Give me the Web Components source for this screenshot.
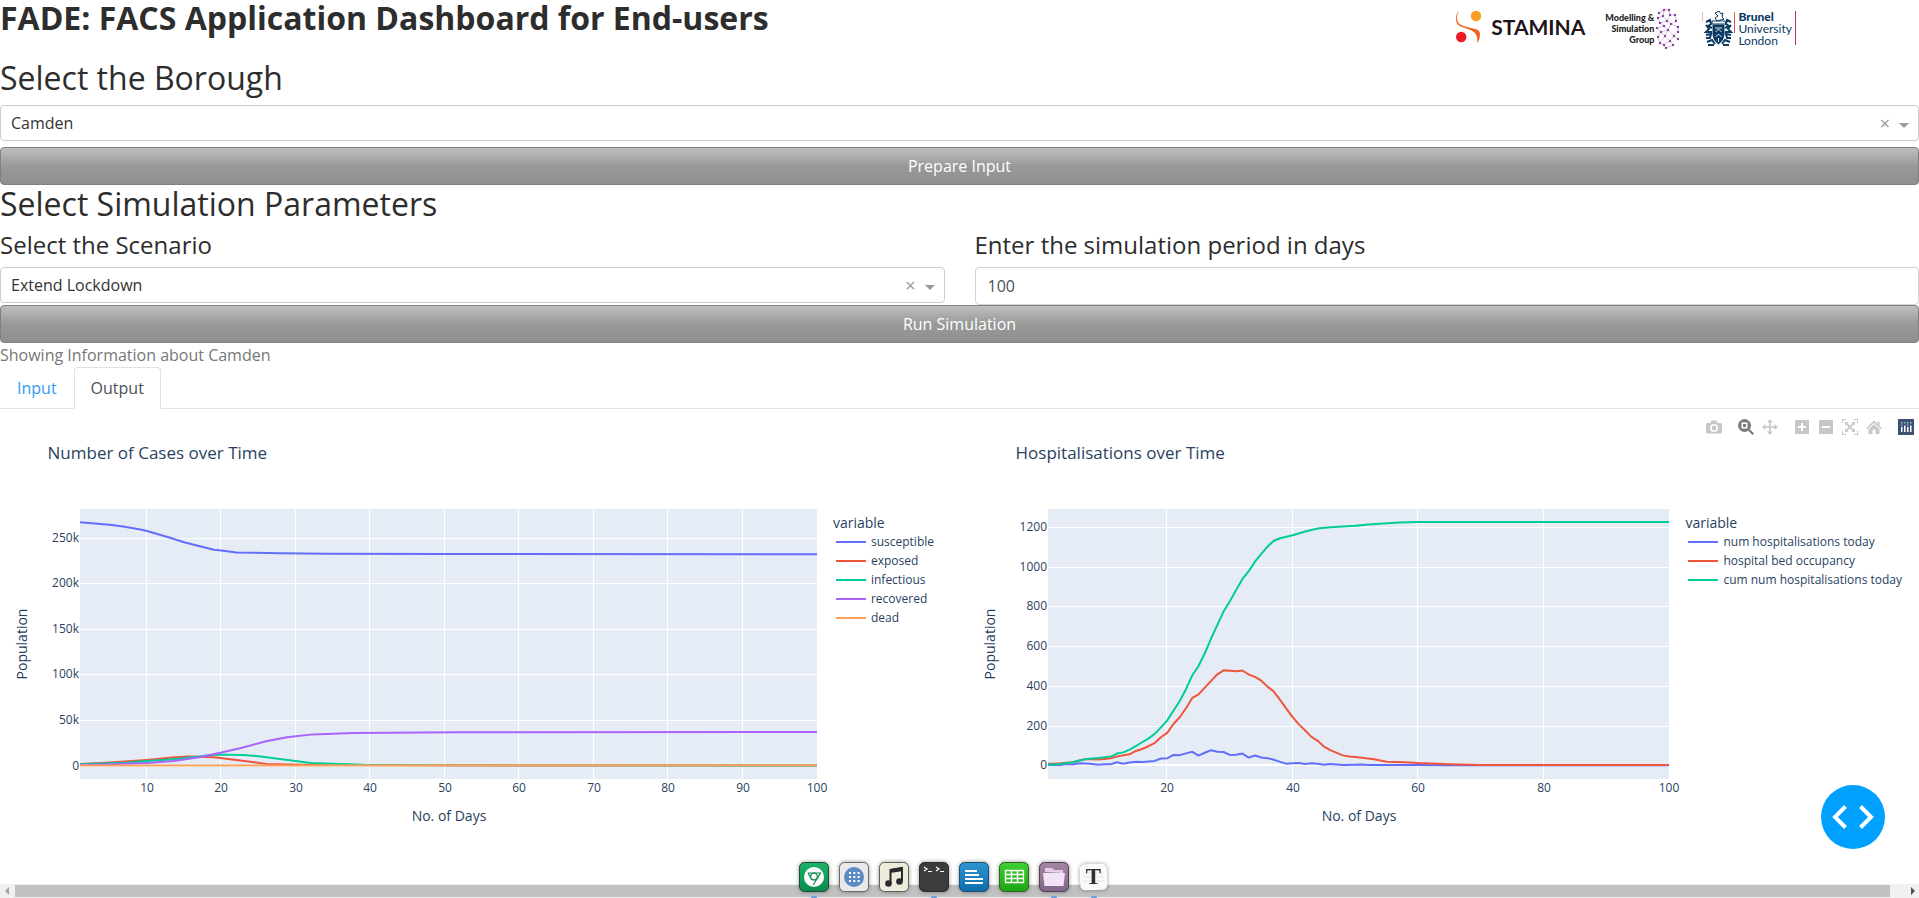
<!DOCTYPE html>
<html lang="en">
<head>
<meta charset="utf-8">
<title>FADE: FACS Application Dashboard for End-users</title>
<style>
  html, body { margin: 0; }
  body { font: 16px/24px "Open Sans", "Noto Sans", sans-serif; color: #777; background: #fff; }
</style>
</head>
<body>
<fade-app></fade-app>
<script>
const define = (name, html, setup) => {
  const template = document.createElement('template');
  template.innerHTML = html;
  customElements.define(name, class extends HTMLElement {
    connectedCallback() {
      if (this.shadowRoot) return;
      this.attachShadow({ mode: 'open' }).append(template.content.cloneNode(true));
      if (setup) setup(this, this.shadowRoot);
    }
  });
};

/* ---------- partner logos ---------- */
define('partner-logos', `
<style>
  :host { display: flex; align-items: flex-start; padding: 8px 0 0 17px; height: 43px; box-sizing: border-box; white-space: nowrap; }
  svg { display: block; flex: none; }
  .stamina { display: flex; align-items: center; gap: 10px; margin: 3px 20px 0 0; font: 700 21px/32px Lato, sans-serif; color: #231218; }
  .group { display: flex; gap: 2px; margin-right: 22px; font: 900 9px/11px Lato, sans-serif; color: #222; text-align: right; }
  .group span { padding-top: 4px; }
  .brunel { display: flex; margin-top: 3px; font: 12px/12px Lato, sans-serif; color: #0b3a64; }
  .brunel span { border-right: 1px solid #c8304a; padding: 0 3px 0 3px; height: 34px; }
  .brunel b { font-weight: 900; }
</style>
<div class="stamina">
  <svg width="25" height="32" viewBox="0 0 25 32"><circle cx="20" cy="5" r="5.2" fill="#f99d25"/><circle cx="5.2" cy="26" r="5.2" fill="#ed1c24"/><path d="M3 0C-1 8 1 13 9 15.500C17 18 24 17 24 23C24 27 23 30 21 32C22 25 20 21 13 18.500C5 15.500 0 15 0 8C0 4 1 2 3 0Z" fill="#f26322"/></svg>
  STAMINA
</div>
<div class="group">
  <span>Modelling &amp;<br>Simulation<br>Group</span>
  <svg id="brain" width="24" height="41" viewBox="0 0 24 41"></svg>
</div>
<div class="brunel">
  <svg width="33" height="36" viewBox="0 0 33 36" fill="none" stroke="#0b3a64">
    <path d="M0.500 1V11" stroke="#f0b8c2"/><path d="M32.500 1V22" stroke="#d8556a"/>
    <path d="M13 2L17 0L19 3L21 2L20 6L22 8L15 10L13 7L16 5ZM10 10H23L24 13H10Z" stroke-width="1"/>
    <path d="M11 14H22V23C22 28 19 31 16.500 33C14 31 11 28 11 23Z" fill="#0b3a64"/>
    <path d="M4 11L8 9L9 13L6 15L10 17M4 14L7 18L4 21L10 21M4 24L9 23L8 27L4 27M29 11L25 9L24 13L27 15L23 17M29 14L26 18L29 21L23 21M29 24L24 23L25 27L29 27M5 31L10 29L13 33M28 31L23 29L20 33M6 34H12M21 34H27" stroke-width="2"/>
    <path d="M13 17H20M13.500 21L16.500 18L19.500 21M13.500 26L16.500 23L19.500 26M16.500 27V31" stroke="#dfe8f0" stroke-width="1"/>
  </svg>
  <span><b>Brunel</b><br>University<br>London</span>
</div>`, (host, root) => {
  const nodes = [[3,5],[8,2],[13,2],[2,10],[7,8],[14,7],[19,7],[20,13],[11,13],[4,15],[1,20],[8,18],[15,16],[22,19],[22,24],[12,22],[5,24],[2,29],[18,28],[22,31],[9,28],[4,35],[14,33],[8,37],[17,37],[10,40]];
  const links = [[0,1],[1,2],[1,4],[2,5],[5,6],[6,7],[4,8],[3,4],[5,8],[8,9],[3,9],[8,12],[7,12],[9,11],[10,11],[12,13],[11,15],[12,15],[13,14],[10,16],[15,16],[15,18],[14,18],[16,17],[16,20],[18,19],[18,22],[20,22],[17,21],[20,21],[21,23],[22,24],[22,23],[23,25],[24,25],[15,20]];
  root.getElementById('brain').innerHTML =
    links.map(([a, b]) => `<path d="M${nodes[a]}L${nodes[b]}" stroke="#c9a3d2" stroke-width=".7"/>`).join('') +
    nodes.map(([x, y]) => `<circle cx="${x}" cy="${y}" r="1.200" fill="#8a3f9d"/>`).join('');
});

/* ---------- gradient button ---------- */
define('wide-button', `
<style>
  :host { display: block; }
  button { display: block; width: 100%; height: 38px; border: 1px solid #808080; border-radius: 4px; padding: 0 12px;
    font: inherit; color: #fff; background: linear-gradient(#bfbfbf, #999 50%, #8f8f8f); cursor: pointer; }
</style>
<button type="button"><slot></slot></button>`);

/* ---------- labelled fields ---------- */
const fieldStyle = `
  :host { display: block; min-width: 0; }
  h2, h4 { margin: 0 0 8px; font-weight: 400; color: #2d2d2d; }
  h2 { font-size: 32px; line-height: 37px; margin-bottom: 9px; }
  h4 { font-size: 24px; line-height: 29px; }`;

define('choice-field', `
<style>${fieldStyle}
  .box { display: flex; align-items: center; height: 36px; box-sizing: border-box; border: 1px solid #ccc; border-radius: 4px; padding-right: 9px; }
  select { flex: 1; min-width: 0; height: 34px; border: 0; padding: 0 10px; background: none; font: inherit; color: #333; appearance: none; outline: 0; }
  button { width: 20px; margin-right: 4px; border: 0; padding: 0; background: none; font: 18px/24px "Open Sans", sans-serif; color: #999; }
  i { border: 5px solid transparent; border-top-color: #999; border-bottom: 0; margin-top: 4px; }
</style>
<div class="head"></div>
<div class="box"><select id="choice"></select><button type="button" aria-label="Clear">×</button><i></i></div>`,
(host, root) => {
  const tag = host.getAttribute('heading');
  root.querySelector('.head').innerHTML = `<${tag}><label for="choice">${host.getAttribute('label')}</label></${tag}>`;
  root.getElementById('choice').add(new Option(host.getAttribute('value')));
});

define('number-field', `
<style>${fieldStyle}
  input { display: block; width: 100%; height: 38px; box-sizing: border-box; border: 1px solid #ced4da; border-radius: 4px; padding: 0 12px; font: inherit; color: #495057; appearance: textfield; }
</style>
<h4><label for="number"></label></h4>
<input id="number" type="text" inputmode="numeric">`,
(host, root) => {
  root.querySelector('label').textContent = host.getAttribute('label');
  root.querySelector('input').value = host.getAttribute('value');
});

/* ---------- tabs ---------- */
define('tab-bar', `
<style>
  :host { display: block; border-bottom: 1px solid #dee2e6; }
  nav { display: flex; margin-bottom: -1px; }
  a { border: 1px solid transparent; border-radius: 4px 4px 0 0; padding: 8px 16px; color: #3399f3; text-decoration: none; }
  a.on { color: #495057; background: #fff; border-color: #dee2e6 #dee2e6 #fff; }
</style>
<nav><a href="#input">Input</a><a href="#output" class="on" aria-current="page">Output</a></nav>`);

/* ---------- chart tool bar ---------- */
define('chart-tools', `
<style>
  :host { display: flex; gap: 8px; }
  div { display: flex; gap: 8px; }
  div + div { margin-left: 8px; }
  button { border: 0; padding: 0; background: none; width: 16px; height: 16px; color: #c7c7c7; }
  button.on { color: #7c7c7c; }
  svg { display: block; fill: currentColor; }
</style>
<div><button aria-label="Download plot"><svg width="16" height="16" viewBox="0 0 16 16"><path fill-rule="evenodd" d="M1.500 4H4.500L5.500 1.500H10.500L11.500 4H14.500Q16 4 16 5.500V13Q16 14.500 14.500 14.500H1.500Q0 14.500 0 13V5.500Q0 4 1.500 4ZM8 5A4 4 0 1 0 8 13A4 4 0 1 0 8 5ZM8 6.600A2.400 2.400 0 1 1 8 11.400A2.400 2.400 0 1 1 8 6.600Z"/></svg></button></div>
<div><button class="on" aria-label="Zoom"><svg width="16" height="16" viewBox="0 0 16 16"><path fill-rule="evenodd" d="M6.500 0A6.500 6.500 0 1 0 6.500 13A6.500 6.500 0 1 0 6.500 0ZM3.500 3.500H9.500V9.500H3.500Z"/><path d="M5 5H8V8H5ZM10 11.500L11.500 10L16 14.500L14.500 16Z"/></svg></button>
<button aria-label="Pan"><svg width="16" height="16" viewBox="0 0 16 16"><path d="M8 0L11 3.500H8.800V7.200H12.500V5L16 8L12.500 11V8.800H8.800V12.500H11L8 16L5 12.500H7.200V8.800H3.500V11L0 8L3.500 5V7.200H7.200V3.500H5Z"/></svg></button></div>
<div><button aria-label="Zoom in"><svg width="16" height="16" viewBox="0 0 16 16"><path fill-rule="evenodd" d="M1 1H15V15H1ZM7 4V7H4V9H7V12H9V9H12V7H9V4Z"/></svg></button>
<button aria-label="Zoom out"><svg width="16" height="16" viewBox="0 0 16 16"><path fill-rule="evenodd" d="M1 1H15V15H1ZM4 7V9H12V7Z"/></svg></button>
<button aria-label="Autoscale"><svg width="16" height="16" viewBox="0 0 16 16"><path d="M0 0H4V1H1V4H0ZM12 0H16V4H15V1H12ZM0 12H1V15H4V16H0ZM15 12H16V16H12V15H15ZM3 3H6.500L5.500 4.200L8 6.700L10.500 4.200L9.500 3H13V6.500L11.800 5.500L9.300 8L11.800 10.500L13 9.500V13H9.500L10.500 11.800L8 9.300L5.500 11.800L6.500 13H3V9.500L4.200 10.500L6.700 8L4.200 5.500L3 6.500Z"/></svg></button>
<button aria-label="Reset axes"><svg width="16" height="16" viewBox="0 0 16 16"><path d="M8 1.500L11.500 5V2.500H13.500V7L16 9.300L15 10.300L8 4L1 10.300L0 9.300ZM8 5.300L13.500 10.200V15H9.500V10.500H6.500V15H2.500V10.200Z"/></svg></button></div>
<div><button aria-label="Produced with Plotly"><svg width="16" height="16" viewBox="0 0 16 16"><path d="M0 0H16V16H0Z" fill="#3f4f75"/><path d="M3 8H4.500V13H3ZM6 6.500H7.500V13H6ZM9 8H10.500V13H9ZM12 6.500H13.500V13H12Z" fill="#fff"/><path d="M3 3H4.500V4.500H3ZM6 3H7.500V4.500H6ZM9 3H10.500V4.500H9ZM12 3H13.500V4.500H12ZM3 5.500H4.500V6.700H3ZM9 5.500H10.500V6.700H9Z" fill="#80cfbe"/></svg></button></div>`);

/* ---------- line chart ---------- */
define('line-chart', `
<style>
  :host { display: block; position: relative; min-width: 0; color: #2a3f5f; }
  h3 { margin: 0; padding: 32px 0 44px 5%; font-size: 17px; line-height: 24px; font-weight: 400; }
  .body { display: grid; grid-template-columns: minmax(0, 1fr) auto; padding: 0 0 80px 80px; }
  .plot { height: 270px; }
  svg { display: block; overflow: visible; }
  text { fill: #2a3f5f; font-size: 12px; }
  text.axis { font-size: 14px; }
  .legend { padding: 4px 17px 0 16px; font-size: 12px; line-height: 19px; }
  .legend p { margin: 0; font-size: 14px; }
  ul { list-style: none; margin: 0; padding: 0 0 0 3px; }
  li { display: flex; align-items: center; gap: 5px; }
  li i { width: 30px; height: 2px; background: var(--ink); }
  ::slotted(chart-tools) { position: absolute; top: 10px; right: 5px; }
</style>
<h3></h3>
<slot></slot>
<div class="body"><div class="plot"></div><div class="legend"><p>variable</p><ul></ul></div></div>`,
(host, root) => {
  const spec = CHARTS[host.getAttribute('data')];
  root.querySelector('h3').textContent = spec.title;
  root.querySelector('ul').innerHTML = spec.series.map(s => `<li style="--ink:${s.ink}"><i></i>${s.name}</li>`).join('');
  const plot = root.querySelector('.plot');
  const H = 270;
  const draw = () => {
    const W = plot.clientWidth;
    const X = d => (d - 1) / 99 * W;
    const Y = v => H - (v - spec.min) / (spec.max - spec.min) * H;
    let out = `<rect width="${W}" height="${H}" fill="#e5ecf6"/>`;
    for (const d of spec.days) {
      const x = Math.round(X(d));
      if (d < 100) out += `<rect x="${x - 1}" y="0" width="1" height="${H}" fill="#fff"/>`;
      out += `<text x="${x}" y="${H + 13}" text-anchor="middle">${d}</text>`;
    }
    for (const [v, label] of spec.levels) {
      const y = Math.round(Y(v));
      out += `<rect x="0" y="${v ? y : y - 1}" width="${W}" height="${v ? 1 : 2}" fill="#fff"/>`;
      out += `<text x="-1" y="${y + 4}" text-anchor="end">${label}</text>`;
    }
    for (const s of spec.series) {
      const pts = s.points.map(([d, v]) => X(d).toFixed(2) + ',' + Y(v).toFixed(2)).join(' ');
      out += `<polyline points="${pts}" fill="none" stroke="${s.ink}" stroke-width="2" stroke-linejoin="round"/>`;
    }
    out += `<text class="axis" x="${Math.round(W / 2)}" y="${H + 42}" text-anchor="middle">No. of Days</text>`;
    out += `<text class="axis" transform="translate(-53 ${H / 2}) rotate(-90)" text-anchor="middle">Population</text>`;
    plot.innerHTML = `<svg width="${W}" height="${H}" role="img" aria-label="${spec.title}">${out}</svg>`;
  };
  draw();
  addEventListener('resize', draw);
});

const fromDayOne = values => values.map((v, i) => [i + 1, v]);
const CHARTS = {
  cases: {
    title: 'Number of Cases over Time', min: -14800, max: 281700,
    days: [10, 20, 30, 40, 50, 60, 70, 80, 90, 100],
    levels: [[0, '0'], [50000, '50k'], [100000, '100k'], [150000, '150k'], [200000, '200k'], [250000, '250k']],
    series: [
      { name: 'susceptible', ink: '#636efa', points: [[1,267100],[3,265800],[5.3,264200],[7,262100],[9.3,259000],[10,257500],[13.1,250200],[15.1,244900],[17.1,240800],[19,237000],[20,236200],[22,234000],[28,233100],[34,232600],[50,232200],[100,232000]] },
      { name: 'exposed', ink: '#ef553b', points: [[1,1600],[4,2900],[7,4300],[10,6200],[13,8500],[15.4,9800],[17,9700],[19,9000],[22,6000],[26,1800],[32,700],[45,200],[100,0]] },
      { name: 'infectious', ink: '#00cc96', points: [[1,1300],[7,3100],[10,4900],[13.5,7000],[17,9900],[19.5,12000],[23,11600],[25,10300],[32,2800],[39,900],[50,200],[100,0]] },
      { name: 'recovered', ink: '#ab63fa', points: [[1,700],[5,1400],[10,2700],[13.6,5000],[17,9200],[20,14200],[22.5,19000],[26,26600],[28.8,31000],[32.3,34200],[37.7,35600],[52,36600],[100,36800]] },
      { name: 'dead', ink: '#ffa15a', points: [[1,0],[20,100],[100,300]] }
    ]
  },
  hospital: {
    title: 'Hospitalisations over Time', min: -69, max: 1290,
    days: [20, 40, 60, 80, 100],
    levels: [[0, '0'], [200, '200'], [400, '400'], [600, '600'], [800, '800'], [1000, '1000'], [1200, '1200']],
    series: [
      { name: 'num hospitalisations today', ink: '#636efa', points: [...fromDayOne([3,1,2,7,4,10,9,6,3,5,5,15,8,14,18,17,19,22,34,35,52,51,60,68,49,63,76,68,67,52,53,59,39,49,39,36,28,17,8,10,11,7,10,8,3,7]),[48,2],[50,3],[51,4],[52,1],[60,1],[65,0],[100,0]] },
      { name: 'hospital bed occupancy', ink: '#ef553b', points: [...fromDayOne([8,8,10,13,15,24,32,31,29,32,35,44,50,55,72,82,96,112,141,163,208,242,287,339,357,391,425,458,478,476,473,477,457,445,426,396,371,329,285,242,206,175,143,123,94,76]),[48,50],[49,44],[50,42],[53,30],[55,18],[58,15],[60,11],[65,5],[70,1],[100,1]] },
      { name: 'cum num hospitalisations today', ink: '#00cc96', points: [...fromDayOne([4,4,6,12,15,24,30,34,37,40,44,59,65,79,97,116,134,158,191,225,275,324,383,453,500,564,638,707,775,826,883,938,977,1025,1064,1101,1130,1143]),[40,1158],[42,1177],[44,1192],[46,1198],[48,1202],[50,1206],[52,1212],[57,1222],[60,1224],[100,1225]] }
    ]
  }
};

/* ---------- debug menu button ---------- */
define('debug-button', `
<style>
  :host { position: fixed; right: 34px; bottom: 49px; }
  button { display: grid; place-items: center; width: 64px; height: 64px; border: 0; border-radius: 50%; padding: 0; background: #00a0ff; }
</style>
<button type="button" aria-label="Developer tools"><svg width="42" height="24" viewBox="0 0 42 24" fill="none" stroke="#fff" stroke-width="4"><path d="M13.500 1.500L3 12L13.500 22.500M28.500 1.500L39 12L28.500 22.500"/></svg></button>`);

/* ---------- horizontal scroll strip ---------- */
define('scroll-strip', `
<style>
  :host { display: flex; align-items: center; height: 14px; background: #f1f1f1; }
  i { border: 4px solid transparent; }
  .l { border-right-color: #a3a3a3; border-left: 0; margin: 0 6px 0 5px; }
  .r { border-left-color: #505050; border-right: 0; margin: 0 4px 0 21px; }
  b { flex: 1; height: 12px; background: #c1c1c1; }
</style>
<i class="l"></i><b></b><i class="r"></i>`);

/* ---------- desktop dock ---------- */
define('app-dock', `
<style>
  :host { position: fixed; left: 0; right: 11px; bottom: 0; display: flex; justify-content: center; gap: 10px; pointer-events: none; }
  button { display: flex; align-items: flex-start; position: relative; width: 30px; height: 36px; border: 0; padding: 0; background: none; }
  svg { display: block; overflow: visible; filter: drop-shadow(0 0 2px rgba(0,0,0,.4)); }
  .on::after { content: ""; position: absolute; left: 12px; bottom: -1px; width: 6px; height: 3px; border-radius: 3px; background: #6ea0dc; box-shadow: 0 0 3px #8fb8ea; }
  text { font: 700 23px/24px "Liberation Serif", serif; }
</style>
<button class="on" aria-label="Browser"><svg width="30" height="30"><defs>
  <linearGradient id="g" x2="0" y2="1"><stop stop-color="#1bb36b"/><stop offset="1" stop-color="#0a8a4d"/></linearGradient></defs>
  <rect x=".5" y=".5" width="29" height="29" rx="5" fill="url(#g)" stroke="#1d4a34"/><circle cx="15" cy="15" r="10" fill="#fff"/><path d="M9 11H21.500L18 17L14 23M9 11L12.500 17.500L17 18M21 11.500L18.500 16.500" stroke="#158a55" stroke-width="1.200" fill="none"/><circle cx="15" cy="14.500" r="3.300" fill="#fff" stroke="#158a55" stroke-width="1.200"/></svg></button>
<button aria-label="Applications"><svg width="30" height="30"><rect x=".5" y=".5" width="29" height="29" rx="5" fill="#e9e9ea" stroke="#6a6a6a"/><circle cx="15" cy="15" r="10" fill="#5b8ac4"/><path d="M10 11H20.600M10 15H20.600M10 19H20.600" stroke="#fff" stroke-width="2" stroke-dasharray="2 2.300"/></svg></button>
<button aria-label="Music"><svg width="30" height="30"><rect x=".5" y=".5" width="29" height="29" rx="5" fill="#ecebdc" stroke="#5f5f56"/><path d="M11.500 21V8L23 6V19" fill="none" stroke="#2a2a2a" stroke-width="2"/><path d="M11 7L24 5V9L11 11Z" fill="#2a2a2a"/><circle cx="9.500" cy="21.500" r="3.300" fill="#2a2a2a"/><circle cx="20.500" cy="19.500" r="3.300" fill="#2a2a2a"/></svg></button>
<button class="on" aria-label="Terminal"><svg width="30" height="30"><rect x=".5" y=".5" width="29" height="29" rx="5" fill="#3c3c3c" stroke="#2b2b2b"/><path d="M5 5L8 7L5 9M9 9.500H13M17 5L20 7L17 9M21 9.500H25" fill="none" stroke="#fff" stroke-width="1.200"/></svg></button>
<button aria-label="Documents"><svg width="30" height="30"><defs><linearGradient id="d" x2="0" y2="1"><stop stop-color="#2d95d2"/><stop offset="1" stop-color="#0f6cab"/></linearGradient></defs><rect x=".5" y=".5" width="29" height="29" rx="5" fill="url(#d)" stroke="#1d4c6d"/><path d="M6 9H18M6 13H20M6 17H24M6 21H24" stroke="#fff" stroke-width="2"/></svg></button>
<button aria-label="Spreadsheets"><svg width="30" height="30"><defs><linearGradient id="s" x2="0" y2="1"><stop stop-color="#3fd032"/><stop offset="1" stop-color="#1fa315"/></linearGradient></defs><rect x=".5" y=".5" width="29" height="29" rx="5" fill="url(#s)" stroke="#2c6426"/><path d="M6.500 8.500H24.500V20.500H6.500ZM6.500 12.500H24.500M6.500 16.500H24.500M12.500 8.500V20.500M18.500 8.500V20.500" fill="none" stroke="#fff" stroke-width="1.400"/></svg></button>
<button class="on" aria-label="Files"><svg width="30" height="30"><defs><linearGradient id="f" x2="0" y2="1"><stop stop-color="#a3879f"/><stop offset="1" stop-color="#82668a"/></linearGradient></defs><rect x=".5" y=".5" width="29" height="29" rx="5" fill="url(#f)" stroke="#4f3f52"/><path d="M6 10V6H13L15 8H24V11Z" fill="#e3cfe8"/><path d="M4 11H26L24.500 24H5.500Z" fill="#f3e3f7"/></svg></button>
<button class="on" aria-label="Text editor"><svg width="30" height="30"><rect x="1" y="2" width="27" height="26" rx="5" fill="#fafafa" transform="rotate(-2 15 15)"/><path d="M4 11H25M4 15H25M4 19H25" stroke="#e4e4e4"/><text x="14.500" y="22" text-anchor="middle" fill="#2e2e2e">T</text></svg></button>`);

/* ---------- page ---------- */
define('fade-app', `
<style>
  :host { display: flex; flex-direction: column; min-height: 100vh; }
  header { display: grid; grid-template-columns: 3fr 1fr; padding-bottom: 16px; }
  h1 { margin: 0; font-size: 32px; line-height: 36px; font-weight: 700; color: #2d2d2d; }
  h2 { margin: 0 0 8px; font-size: 32px; line-height: 37px; font-weight: 400; color: #2d2d2d; }
  .first { margin-top: 6px; }
  .params { display: grid; grid-template-columns: repeat(2, minmax(0, 1fr)); gap: 30px; }
  .charts { display: grid; grid-template-columns: repeat(2, minmax(0, 1fr)); gap: 17px; }
  p { margin: 0; }
  scroll-strip { margin-top: auto; }
</style>
<header><h1>FADE: FACS Application Dashboard for End-users</h1><partner-logos></partner-logos></header>
<choice-field heading="h2" label="Select the Borough" value="Camden"></choice-field>
<wide-button class="first">Prepare Input</wide-button>
<h2>Select Simulation Parameters</h2>
<div class="params">
  <choice-field heading="h4" label="Select the Scenario" value="Extend Lockdown"></choice-field>
  <number-field label="Enter the simulation period in days" value="100"></number-field>
</div>
<wide-button>Run Simulation</wide-button>
<p>Showing Information about Camden</p>
<tab-bar></tab-bar>
<div class="charts">
  <line-chart data="cases"></line-chart>
  <line-chart data="hospital"><chart-tools></chart-tools></line-chart>
</div>
<scroll-strip></scroll-strip>
<debug-button></debug-button>
<app-dock></app-dock>`);
</script>
</body>
</html>
